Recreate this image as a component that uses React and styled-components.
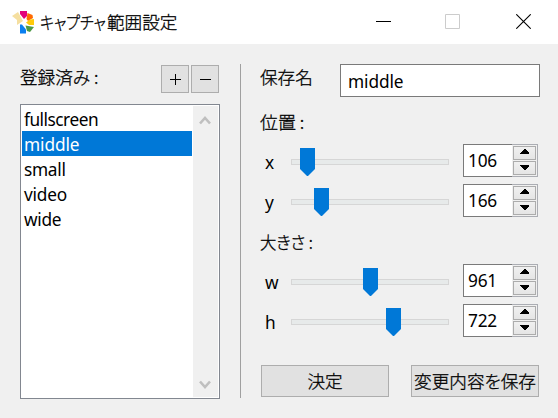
import React from "react";
import styled, { createGlobalStyle } from "styled-components";

const GlobalStyle = createGlobalStyle`
  *, *::before, *::after { box-sizing: border-box; }
  body { margin: 0; background: #f0f0f0; overflow: hidden; }
  button { font: inherit; color: inherit; padding: 0; margin: 0; border-radius: 0; }
`;

const Window = styled.div`
  width: 558px;
  height: 418px;
  display: flex;
  flex-direction: column;
  background: #f0f0f0;
  color: #000;
  font-family: "Noto Sans", "Noto Sans CJK JP", sans-serif;
  font-size: 17px;
  line-height: 24px;
  white-space: nowrap;
`;

const TitleBar = styled.header`
  height: 44px;
  display: flex;
  align-items: center;
  padding-left: 12px;
  background: #fff;
`;

const Title = styled.h1`
  flex: 1;
  display: flex;
  margin: 0 0 0 5px;
  font-weight: 400;
  font-size: 17.7px;
  line-height: 42px;
`;

const Jp = styled.span`
  display: inline-block;
  width: ${(p) => (p.$width ? `${p.$width}px` : "auto")};
  font-family: "Noto Sans CJK JP", sans-serif;
  font-weight: 300;
  font-size: 17.6px;
  -webkit-text-stroke: 0.3px currentColor;
  font-feature-settings: "palt" ${(p) => (p.$palt ? 1 : 0)};
  transform: scaleX(${(p) => p.$stretch || 1});
  transform-origin: ${(p) => p.$origin || "left"} center;
`;

const CaptionButton = styled.button`
  width: 70px;
  height: 44px;
  display: flex;
  align-items: flex-start;
  padding: 14px 0 0 ${(p) => p.$inset}px;
  border: 0;
  background: transparent;
`;

const Content = styled.main`
  flex: 1;
  display: flex;
  padding: 20px 18px 19px 20px;
`;

const Registered = styled.section`
  width: 200px;
  display: flex;
  flex-direction: column;
`;

const RegisteredHeader = styled.div`
  height: 40px;
  display: flex;
  gap: 2px;
  padding: 1px 1px 0 0;
`;

const RegisteredLabel = styled.div`
  flex: 1;
  line-height: 24px;
`;

const PushButton = styled.button`
  width: ${(p) => p.$w}px;
  height: ${(p) => p.$h}px;
  display: flex;
  align-items: center;
  justify-content: center;
  background: #e1e1e1;
  border: 1px solid #adadad;
`;

const ListBox = styled.div`
  height: 295px;
  display: flex;
  padding: 1px;
  background: #fff;
  border: 1px solid #828790;
`;

const Items = styled.ul`
  flex: 1;
  margin: 0;
  padding: 0;
  list-style: none;
`;

const Item = styled.li`
  height: 25px;
  width: 170px;
  padding-left: 2px;
  line-height: 28px;
  font-size: 17.3px;
  letter-spacing: ${(p) => p.$track}px;
  background: ${(p) => (p.$selected ? "#0078d7" : "transparent")};
  color: ${(p) => (p.$selected ? "#fff" : "#000")};
`;

const ScrollBar = styled.div`
  width: 25px;
  display: flex;
  flex-direction: column;
  justify-content: space-between;
  align-items: center;
  padding: 9px 1px 7px 0;
  background: #f0f0f0;
`;

const Divider = styled.div`
  width: 1px;
  height: 334px;
  margin: 0 20px;
  background: #a0a0a0;
`;

const Settings = styled.section`
  width: 279px;
  display: flex;
  flex-direction: column;
`;

const NameRow = styled.label`
  height: 40px;
  display: flex;
`;

const NameLabel = styled.span`
  width: 80px;
  margin-left: -1px;
  line-height: 26px;
`;

const NameField = styled.input`
  width: 200px;
  height: 33px;
  padding: 1px 7px 0;
  border: 1px solid #7a7a7a;
  border-radius: 0;
  outline: 0;
  background: #fff;
  color: #000;
  font: 17.3px "Noto Sans", sans-serif;
  letter-spacing: -0.1px;
`;

const GroupLabel = styled.div`
  height: 40px;
  margin-left: -1px;
  line-height: 35px;
`;

const ValueRow = styled.div`
  height: 40px;
  display: flex;
`;

const Axis = styled.span`
  width: 30px;
  padding-left: 4px;
  font-size: 17.3px;
  line-height: 37px;
`;

const Slider = styled.div`
  width: 159px;
  height: 33px;
  display: flex;
  align-items: center;
  position: relative;
  margin-right: 13px;
`;

const Groove = styled.div`
  width: 158px;
  height: 6px;
  margin-top: 3px;
  background: #e7eaea;
  border: 1px solid #d6d6d6;
`;

const Thumb = styled.svg`
  position: absolute;
  top: 4px;
`;

const SpinBox = styled.div`
  width: 75px;
  height: 33px;
  display: flex;
  background: #fff;
`;

const SpinValue = styled.span`
  width: 49px;
  padding-left: 4px;
  border: 1px solid #7a7a7a;
  border-right: 0;
  font-size: 17.3px;
  letter-spacing: -0.2px;
  line-height: 32px;
`;

const SpinButtons = styled.div`
  width: 26px;
  display: flex;
  flex-direction: column;
  gap: 1px;
  padding: 1px;
  border: 1px solid #abadb3;
  border-left: 0;
  background: #f0f0f0;
`;

const SpinButton = styled.button`
  width: 23px;
  height: 14px;
  display: flex;
  justify-content: center;
  align-items: flex-start;
  padding-top: 2px;
  border: 1px solid #acacac;
  background: linear-gradient(#f0f0f0, #e5e5e5);
`;

const Actions = styled.div`
  display: flex;
  gap: 22px;
  margin-top: 21px;
`;

const AppIcon = () => (
  <svg width="23" height="24" viewBox="0 0 23 24">
    <path d="M0 6l6-4 5 9-6 4 0-5z" fill="#f5dfa0" />
    <path d="M8 1h7l0 5-3 3-4-5z" fill="#e2007a" />
    <path d="M15.5 3l5 2 .5 3-5 3-1.5-2z" fill="#ff6a00" />
    <path d="M14 12.5l4-3 4-.5v6h-5z" fill="#ffca0a" />
    <path d="M13.5 15.5l8.500 1.500-4 5-3-1z" fill="#4e9a47" />
    <path d="M8 14.5l2 0 4 5v4H8z" fill="#0a7ff0" />
  </svg>
);

const Chevron = ({ down }) => (
  <svg width="12" height="10" viewBox="0 0 12 10">
    <path
      d={down ? "M1 1.5l5 5.5 5-5.5" : "M1 8.5L6 3l5 5.5"}
      fill="none"
      stroke="#bfbfbf"
      strokeWidth="2.6"
    />
  </svg>
);

const Arrow = ({ down }) => (
  <svg width="11" height="6" viewBox="0 0 11 6" shapeRendering="crispEdges">
    <path d={down ? "M1 1h9v1L6 6H5L1 2z" : "M5 0h1l4 4v1H1V4z"} fill="#000" />
  </svg>
);

const Value = ({ name, value, offset }) => (
  <ValueRow>
    <Axis>{name}</Axis>
    <Slider>
      <Groove />
      <Thumb style={{ left: offset }} width="15" height="28" viewBox="0 0 15 28">
        <path d="M0 0h15v21l-7 7h-1L0 21z" fill="#0078d7" />
      </Thumb>
    </Slider>
    <SpinBox>
      <SpinValue>{value}</SpinValue>
      <SpinButtons>
        <SpinButton aria-label="up"><Arrow /></SpinButton>
        <SpinButton aria-label="down"><Arrow down /></SpinButton>
      </SpinButtons>
    </SpinBox>
  </ValueRow>
);

const names = [
  ["fullscreen", -0.5],
  ["middle", -0.1],
  ["small", -0.3],
  ["video", -0.2],
  ["wide", -0.3],
];

export default function App() {
  return (
    <>
      <GlobalStyle />
      <Window>
        <TitleBar>
          <AppIcon />
          <Title>
            <Jp $palt $stretch={0.85} $width={67}>キャプチャ</Jp>
            <Jp>範囲設定</Jp>
          </Title>
          <CaptionButton $inset={28} aria-label="minimize">
            <svg width="15" height="15"><path d="M0 7h15v1H0z" fill="#000" /></svg>
          </CaptionButton>
          <CaptionButton $inset={27} aria-label="maximize">
            <svg width="15" height="15"><path d="M.5.5h14v14H.5z" fill="none" stroke="#ccc" /></svg>
          </CaptionButton>
          <CaptionButton $inset={28} aria-label="close">
            <svg width="15" height="15"><path d="M.3.3l14.4 14.4M14.7.3L.3 14.7" stroke="#000" strokeWidth="1.1" /></svg>
          </CaptionButton>
        </TitleBar>
        <Content>
          <Registered>
            <RegisteredHeader>
              <RegisteredLabel><Jp $palt>登録済み :</Jp></RegisteredLabel>
              <PushButton $w={28} $h={28} aria-label="add">
                <svg width="11" height="11"><path d="M0 5h11v1H0zM5 0h1v11H5z" fill="#000" /></svg>
              </PushButton>
              <PushButton $w={28} $h={28} aria-label="remove">
                <svg width="11" height="11"><path d="M0 5h11v1H0z" fill="#000" /></svg>
              </PushButton>
            </RegisteredHeader>
            <ListBox>
              <Items>
                {names.map(([name, track]) => (
                  <Item key={name} $track={track} $selected={name === "middle"}>{name}</Item>
                ))}
              </Items>
              <ScrollBar>
                <Chevron />
                <Chevron down />
              </ScrollBar>
            </ListBox>
          </Registered>
          <Divider />
          <Settings>
            <NameRow>
              <NameLabel><Jp>保存名</Jp></NameLabel>
              <NameField defaultValue="middle" />
            </NameRow>
            <GroupLabel><Jp $palt $stretch={1.02}>位置 :</Jp></GroupLabel>
            <Value name="x" value="106" offset={9} />
            <Value name="y" value="166" offset={23} />
            <GroupLabel><Jp $palt $stretch={0.93}>大きさ :</Jp></GroupLabel>
            <Value name="w" value="961" offset={72} />
            <Value name="h" value="722" offset={95} />
            <Actions>
              <PushButton $w={128} $h={32}><Jp>決定</Jp></PushButton>
              <PushButton $w={128} $h={32}><Jp $palt $origin="center">変更内容を保存</Jp></PushButton>
            </Actions>
          </Settings>
        </Content>
      </Window>
    </>
  );
}
